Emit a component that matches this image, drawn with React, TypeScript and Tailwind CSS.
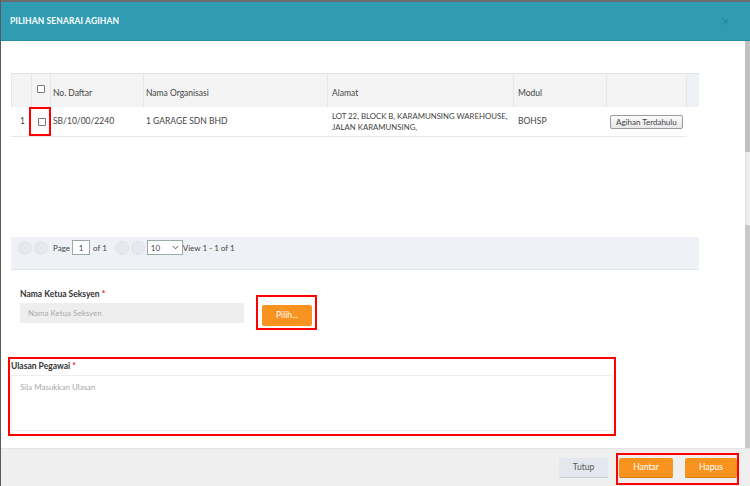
import React from 'react';

const Req = () => <span className="text-[#e02424]"> *</span>;

const RedBox: React.FC<{ className: string }> = ({ className }) => (
  <div className={`absolute border-2 border-[#ff0000] pointer-events-none ${className}`} />
);

const Circle = () => <span className="w-[14px] h-[14px] rounded-full bg-[#e6e9ee] border border-[#dfe3e9]" />;

export default function App() {
  return (
    <div className="w-[750px] h-[486px] flex flex-col bg-white overflow-hidden text-[#333] border-l border-[#5a5a5a]"
      style={{ fontFamily: 'Lato, "Open Sans", sans-serif' }}>
      <div className="h-[2px] bg-[#6c6c6c] shrink-0" />

      {/* header */}
      <div className="h-[39px] shrink-0 bg-[#2f9cb4] border-b border-[#2a8aa0] flex items-center justify-between pl-[9px] pr-[20px]">
        <h2 className="text-[8.5px] font-bold text-white tracking-[0.1px]">PILIHAN SENARAI AGIHAN</h2>
        <span className="text-[#23778a] text-[15px] leading-none font-light">×</span>
      </div>

      <div className="flex-1 flex min-h-0">
        {/* body */}
        <div className="flex-1 pl-[10px] pr-[46px] pt-[32px]">
          {/* table header */}
          <div className="flex h-[34px] bg-[#f4f4f4] border-t border-[#e2e2e2] text-[8.5px] text-[#444]">
            <div className="w-[21px] border-l border-r border-[#e6e6e6]" />
            <div className="w-[19px] border-r border-[#e6e6e6] flex justify-center pt-[11px]">
              <span className="w-[8px] h-[8px] border border-[#777] rounded-[1px] bg-white" />
            </div>
            <div className="w-[93px] border-r border-[#e6e6e6] flex items-end pb-[7px] pl-[2px]">No. Daftar</div>
            <div className="w-[184px] border-r border-[#e6e6e6] flex items-end pb-[7px] pl-[2px]">Nama Organisasi</div>
            <div className="w-[186px] border-r border-[#e6e6e6] flex items-end pb-[7px] pl-[4px]">Alamat</div>
            <div className="w-[93px] border-r border-[#e6e6e6] flex items-end pb-[7px] pl-[4px]">Modul</div>
            <div className="w-[80px] border-r border-[#e6e6e6]" />
            <div className="w-[12px] bg-[#eef2f7]" />
          </div>

          {/* data row */}
          <div className="flex w-[676px] h-[30px] border-b border-[#e8e8e8] text-[8.5px] text-[#444] items-center">
            <div className="w-[21px] pl-[9px]">1</div>
            <div className="w-[19px] h-full relative flex items-center justify-center">
              <span className="w-[8px] h-[8px] border border-[#777] rounded-[1px] bg-white" />
              <RedBox className="-left-[3px] right-0 top-0 bottom-0" />
            </div>
            <div className="w-[93px] pl-[2px]">SB/10/00/2240</div>
            <div className="w-[184px] pl-[2px]">1 GARAGE SDN BHD</div>
            <div className="w-[186px] pl-[4px] text-[7.8px] leading-[11px] whitespace-nowrap">LOT 22, BLOCK B, KARAMUNSING WAREHOUSE,<br />JALAN KARAMUNSING,</div>
            <div className="w-[93px] pl-[4px]">BOHSP</div>
            <div className="w-[80px] pl-[3px]">
              <button className="h-[14px] px-[5px] border border-[#9a9a9a] rounded-[2px] bg-gradient-to-b from-[#fafafa] to-[#e8e8e8] text-[8px] text-[#444] leading-none">
                Agihan Terdahulu
              </button>
            </div>
          </div>

          {/* pager */}
          <div className="mt-[100px] h-[33px] bg-[#eef1f6] border-b border-[#e1e5ec] flex items-start pt-[3px] pl-[7px] text-[8px] text-[#444]">
            <div className="flex items-center gap-[2px] h-[15px]">
              <Circle /><Circle />
              <span className="ml-[3px]">Page</span>
              <span className="w-[18px] h-[15px] border border-[#9aa] bg-white flex items-center justify-center">1</span>
              <span className="ml-[1px]">of 1</span>
              <span className="ml-[4px]" />
              <Circle /><Circle />
              <span className="w-[36px] h-[15px] border border-[#9aa] bg-white flex items-center justify-between pl-[3px] pr-[3px]">
                10
                <svg width="7" height="5" viewBox="0 0 7 5"><path d="M0.8 1 L3.5 3.8 L6.2 1" fill="none" stroke="#555" strokeWidth="1" /></svg>
              </span>
              <span className="-ml-[2px]">View 1 - 1 of 1</span>
            </div>
          </div>

          {/* Nama Ketua Seksyen */}
          <div className="pl-[9px] mt-[19px]">
            <div className="text-[8.5px] font-bold text-[#333] h-[10px] leading-[10px]">Nama Ketua Seksyen<Req /></div>
            <div className="flex items-center mt-[1px]">
              <div className="w-[224px] h-[20px] bg-[#eeeeee] flex items-center pl-[8px] text-[8px] text-[#aaa]">Nama Ketua Seksyen</div>
              <div className="relative ml-[18px]">
                <button className="w-[50px] h-[21px] bg-[#f7931e] rounded-[2px] text-white text-[8.5px]">Pilih...</button>
                <RedBox className="-left-[6px] -right-[5px] -top-[5px] -bottom-[4px]" />
              </div>
            </div>
          </div>

          {/* Ulasan */}
          <div className="relative mt-[31px] w-[608px] ml-[-3px] h-[79px] border-2 border-[#ff0000] pl-[1px] pt-[1px]">
            <div className="text-[8.5px] font-bold text-[#333] h-[12px] leading-[12px]">Ulasan Pegawai<Req /></div>
            <div className="w-[602px] h-[56px] mt-[3px] border border-[#eeeeee] pl-[8px] pt-[5px] text-[8px] text-[#aaa]">Sila Masukkan Ulasan</div>
          </div>
        </div>

        {/* scrollbar */}
        <div className="w-[6px] flex flex-col shrink-0">
          <div className="h-[111px] bg-[#c1c1c1]" />
          <div className="h-[73px] bg-[#ededed] border-l border-[#dcdcdc]" />
          <div className="flex-1 bg-[#c8c8c8]" />
        </div>
      </div>

      {/* footer */}
      <div className="h-[38px] shrink-0 bg-[#efefef] border-t border-[#e4e4e4] flex items-start justify-end pt-[9px] pr-[13px]">
        <button className="w-[49px] h-[20px] bg-[#e4e8ee] border-b border-[#c9ced6] rounded-[2px] text-[8.5px] text-[#555]">Tutup</button>
        <div className="relative ml-[11px] flex gap-[12px]">
          <button className="w-[54px] h-[20px] bg-[#f7931e] border-b border-[#d77a10] rounded-[2px] text-[8.5px] text-white">Hantar</button>
          <button className="w-[52px] h-[20px] bg-[#f7931e] border-b border-[#d77a10] rounded-[2px] text-[8.5px] text-white">Hapus</button>
          <RedBox className="-left-[3px] -right-[2px] -top-[5px] -bottom-[7px]" />
        </div>
      </div>
    </div>
  );
}
